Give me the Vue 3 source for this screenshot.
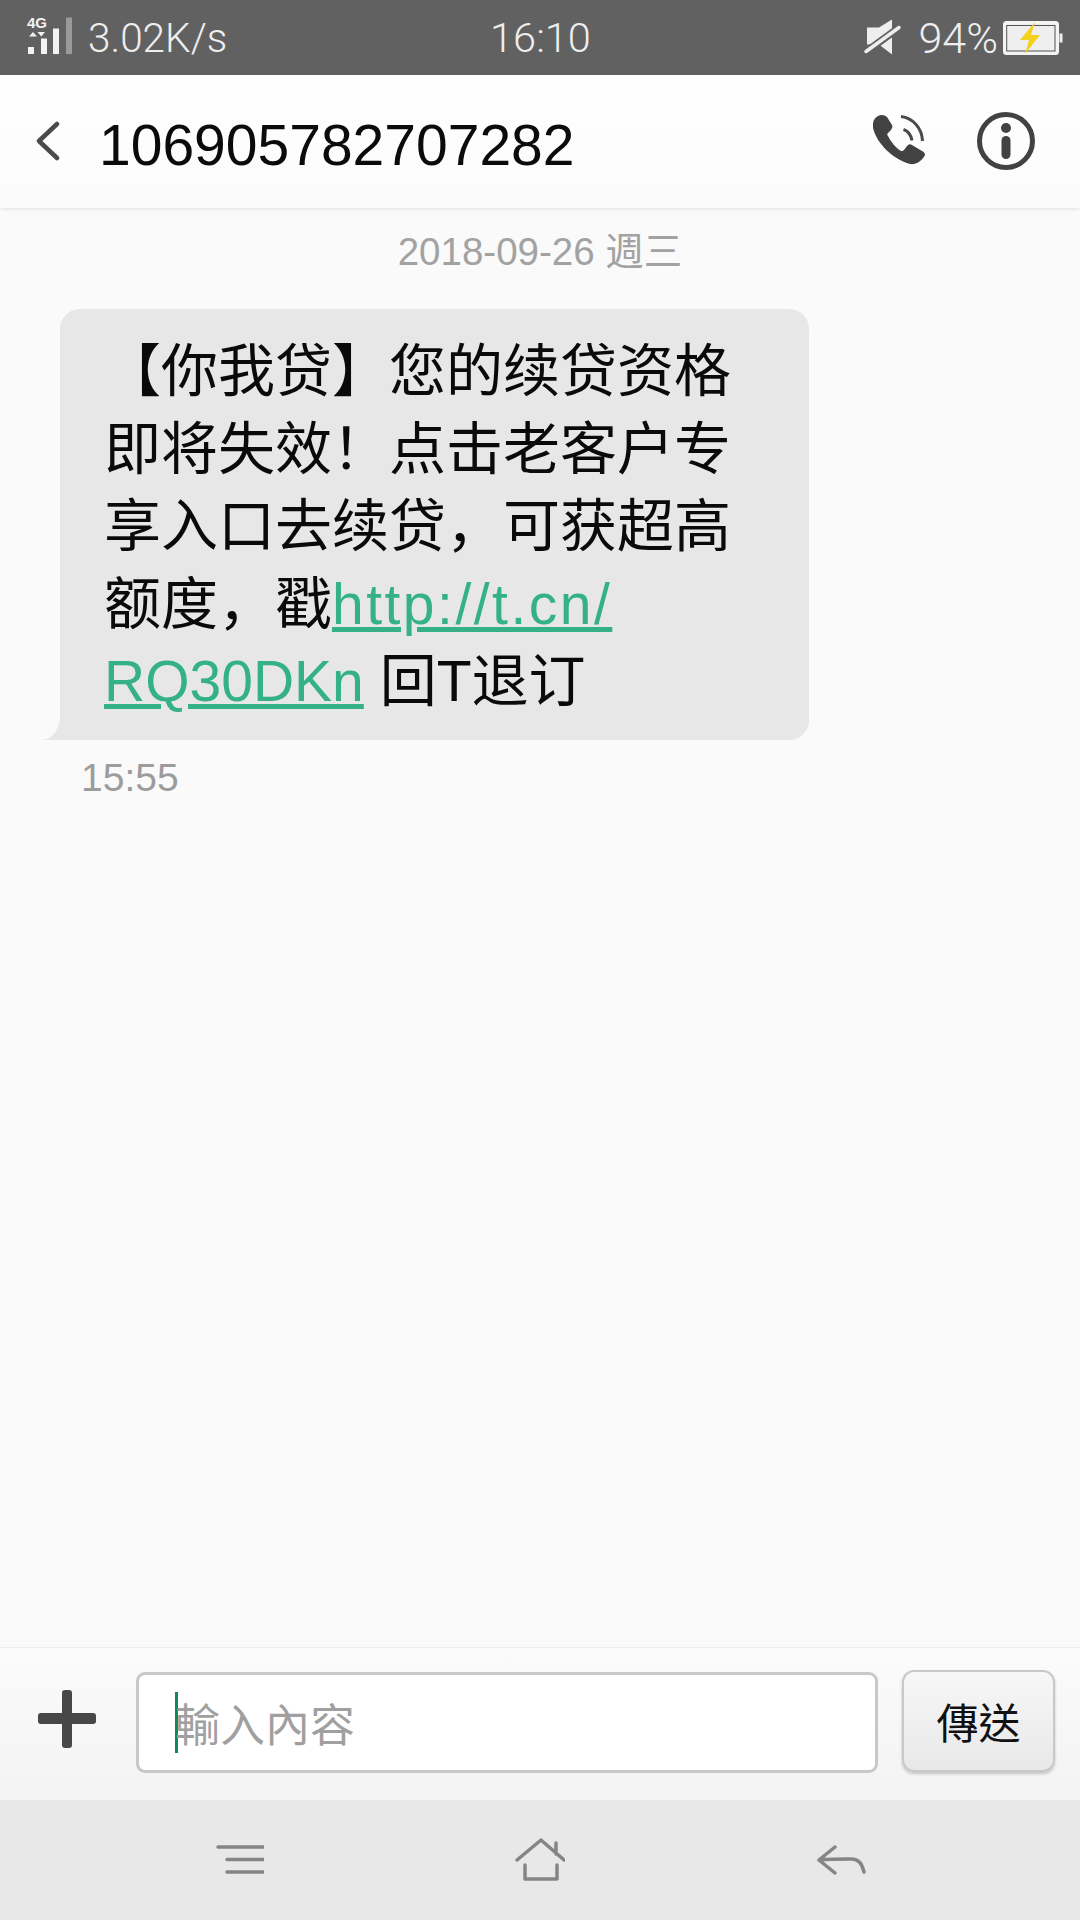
<script setup>
const lines = ['【你我贷】您的续贷资格', '即将失效！点击老客户专', '享入口去续贷，可获超高']
</script>

<template>
  <div class="screen">
    <div class="status">
      <div class="status-left">
        <svg class="signal" width="50" height="42" viewBox="0 0 50 42">
          <text x="-1" y="11" class="net">4G</text>
          <path d="M1 19.500l4-4.500 4 4.500zM9.500 15h7.500l-3.750 4.500z" fill="#f2f2f2" />
          <rect x="0" y="30" width="6" height="7" fill="#f2f2f2" />
          <rect x="13" y="21.500" width="6" height="15.500" fill="#f2f2f2" />
          <rect x="25" y="11.500" width="6" height="25.500" fill="#f2f2f2" />
          <rect x="38" y="0.500" width="6" height="36.500" fill="#9a9a9a" />
        </svg>
        <span>3.02K/s</span>
      </div>
      <div class="clock">16:10</div>
      <div class="status-right">
        <svg width="36" height="38" viewBox="0 0 36 38">
          <path d="M2 8.500h12L27 .5v35L14 25.500H2z" fill="#eee" />
          <path d="M-2 35L37 6.500" stroke="#616161" stroke-width="7.500" />
          <path d="M1 32.500L34 8.500" stroke="#eee" stroke-width="3.500" stroke-linecap="round" />
        </svg>
        <span class="pct">94%</span>
        <svg class="battery" width="60" height="36" viewBox="0 0 60 36">
          <rect x="2.500" y="2.500" width="53" height="31" rx="2" fill="#eee" stroke="#f4f4f4" stroke-width="3" />
          <rect x="4.700" y="5.500" width="48.300" height="25.500" fill="#efefef" stroke="#555" stroke-width="1" />
          <rect x="57.500" y="13.500" width="3" height="9" fill="#eee" />
          <path d="M33 2L18 20h9l-4 14 15-19h-9z" fill="#f4d11c" />
        </svg>
      </div>
    </div>

    <header class="head">
      <svg width="26" height="40" viewBox="0 0 26 40" class="back">
        <path d="M22 3L4 20l18 17" fill="none" stroke="#4a4a4a" stroke-width="4.500" stroke-linecap="round" stroke-linejoin="round" />
      </svg>
      <div class="number">106905782707282</div>
      <svg class="phone" width="54" height="54" viewBox="13 13 54 54">
        <path d="M18 15C14 17 12 22 13 27C17 43 33 58 50 63C56 64 62 60 65 54C65 52 64 51 62 50L52 44C50 43 49 43 47 45L44 49C43 50 42 50 41 50C36 47 31 41 28 35C27 34 27 33 28 32L31 29C32 27 33 26 32 24L27 16C25 14 21 13 18 15Z" fill="#424242" />
        <path d="M41 15.500C53 17 62 27 62.500 40" fill="none" stroke="#4a4a4a" stroke-width="3" />
        <path d="M43.500 28.500C48 30 51 34 52 39.500" fill="none" stroke="#4a4a4a" stroke-width="3" />
      </svg>
      <svg class="info" width="60" height="60" viewBox="0 0 60 60">
        <circle cx="30" cy="30" r="26.500" fill="none" stroke="#424242" stroke-width="5" />
        <circle cx="30" cy="17" r="5" fill="#424242" />
        <rect x="25.500" y="25" width="9" height="23" rx="4.500" fill="#424242" />
      </svg>
    </header>

    <main class="thread">
      <div class="date">2018-09-26 週三</div>
      <div class="bubble">
        <svg class="tail" width="17" height="20" viewBox="0 0 17 20">
          <path d="M17 0v20H0C8 19 15 12 17 0z" fill="#e7e7e7" />
        </svg>
        <div v-for="line in lines" :key="line">{{ line }}</div>
        <div>额度，戳<a class="link wide">http://t.cn/</a></div>
        <div><a class="link">RQ30DKn</a> 回T退订</div>
      </div>
      <div class="time">15:55</div>
    </main>

    <section class="composer">
      <svg class="plus" width="58" height="58" viewBox="0 0 58 58">
        <path d="M24 3a3 3 0 0 1 3-3h4a3 3 0 0 1 3 3v20h21a3 3 0 0 1 3 3v5a3 3 0 0 1-3 3H34v21a3 3 0 0 1-3 3h-4a3 3 0 0 1-3-3V34H3a3 3 0 0 1-3-3v-5a3 3 0 0 1 3-3h21z" fill="#474747" />
      </svg>
      <div class="input">
        <span class="caret"></span>
        <span class="hint">輸入內容</span>
      </div>
      <div class="send">傳送</div>
    </section>

    <nav class="nav">
      <svg width="48" height="30" viewBox="0 0 48 30">
        <path d="M2 2h46M11 14.500h37M11 27h37" stroke="#858585" stroke-width="3.500" stroke-linecap="round" />
      </svg>
      <svg width="50" height="46" viewBox="0 0 50 46">
        <path d="M2 23L26 3l23 20M41 6v11M10 28v14h32V28" fill="none" stroke="#858585" stroke-width="3.500" stroke-linecap="round" stroke-linejoin="round" />
      </svg>
      <svg width="50" height="32" viewBox="0 0 50 32">
        <path d="M19 3L3 16l16 13M3 16C14 15 25 15 35 15C43 15 46 20 48 28" fill="none" stroke="#858585" stroke-width="3.500" stroke-linecap="round" stroke-linejoin="round" />
      </svg>
    </nav>
  </div>
</template>

<style scoped>
.screen {
  width: 1080px;
  height: 1920px;
  display: flex;
  flex-direction: column;
  background: #fafafa;
  font-family: "Liberation Sans", "Noto Sans CJK SC", sans-serif;
  overflow: hidden;
}
.status {
  height: 75px;
  flex: none;
  background: #616161;
  color: #eeeeee;
  display: flex;
  align-items: center;
  justify-content: space-between;
  font-family: Roboto, "Liberation Sans", sans-serif;
  font-weight: 300;
  font-size: 40.500px;
  padding: 0 18px 0 28px;
  position: relative;
}
.status-left,
.status-right {
  display: flex;
  align-items: center;
}
.status-left {
  gap: 10px;
}
.signal {
  overflow: visible;
}
.net {
  font-family: "Liberation Sans", sans-serif;
  font-size: 15px;
  font-weight: 700;
  fill: #f2f2f2;
}
.clock {
  position: absolute;
  left: 1px;
  right: 0;
  text-align: center;
  font-size: 41.500px;
}
.status-right svg {
  overflow: visible;
}
.pct {
  margin-left: 18px;
  font-size: 43px;
}
.battery {
  margin-left: 4px;
}
.head {
  height: 133px;
  flex: none;
  display: flex;
  align-items: center;
  padding: 0 44px 0 35px;
  background: linear-gradient(#ffffff, #fbfbfb);
  box-shadow: 0 1px 4px rgba(0, 0, 0, 0.1);
  position: relative;
}
.back {
  margin-top: -2px;
}
.number {
  font-size: 57px;
  color: #0b0b0b;
  margin-left: 38px;
  flex: 1;
  margin-top: 7px;
}
.phone {
  margin-right: 49px;
  margin-top: -2px;
}
.info {
  margin-top: -2px;
}
.thread {
  flex: 1;
  padding: 0 0 0 60px;
}
.date {
  margin: 24px 0 0 -60px;
  text-align: center;
  font-size: 38.500px;
  line-height: 40px;
  color: #a2a2a2;
}
.bubble {
  position: relative;
  box-sizing: border-box;
  width: 749px;
  height: 431px;
  margin-top: 37px;
  padding: 24px 0 0 44px;
  background: #e7e7e7;
  border-radius: 20px 20px 20px 0;
  font-size: 57px;
  line-height: 77.600px;
  color: #0a0a0a;
  white-space: nowrap;
}
.tail {
  position: absolute;
  left: -17px;
  bottom: 0;
}
.link {
  color: #34b285;
  text-decoration: underline;
}
.wide {
  letter-spacing: 2.500px;
}
.time {
  margin: 18px 0 0 21px;
  font-size: 39px;
  line-height: 40px;
  color: #9c9c9c;
}
.composer {
  height: 153px;
  flex: none;
  box-sizing: border-box;
  border-top: 1px solid #eeeeee;
  background: linear-gradient(#fbfbfb, #f3f3f3);
  display: flex;
  align-items: flex-start;
  padding: 24px 25px 0 38px;
}
.plus {
  margin: 18px 40px 0 0;
  flex: none;
}
.input {
  box-sizing: border-box;
  width: 742px;
  height: 101px;
  border: 3px solid #c8c8c8;
  border-radius: 9px;
  background: #fff;
  display: flex;
  align-items: center;
  padding-left: 36px;
  font-size: 45px;
  color: #a0a0a0;
}
.caret {
  width: 3px;
  height: 61px;
  background: #0f8a5a;
  flex: none;
}
.hint {
  margin-left: -3px;
}
.send {
  box-sizing: border-box;
  width: 153px;
  height: 102px;
  margin: -2px 0 0 24px;
  padding-bottom: 2px;
  border: 2px solid #c8c8c8;
  border-radius: 12px;
  background: linear-gradient(#f7f7f7, #e8e8e8);
  box-shadow: 0 2px 3px rgba(0, 0, 0, 0.2);
  display: flex;
  align-items: center;
  justify-content: center;
  font-family: "Noto Sans CJK TC", sans-serif;
  font-size: 42px;
  color: #111;
}
.nav {
  height: 120px;
  flex: none;
  box-sizing: border-box;
  background: #e8e8e8;
  display: flex;
  justify-content: center;
  align-items: center;
  gap: 251px;
  padding-left: 2px;
}
</style>
